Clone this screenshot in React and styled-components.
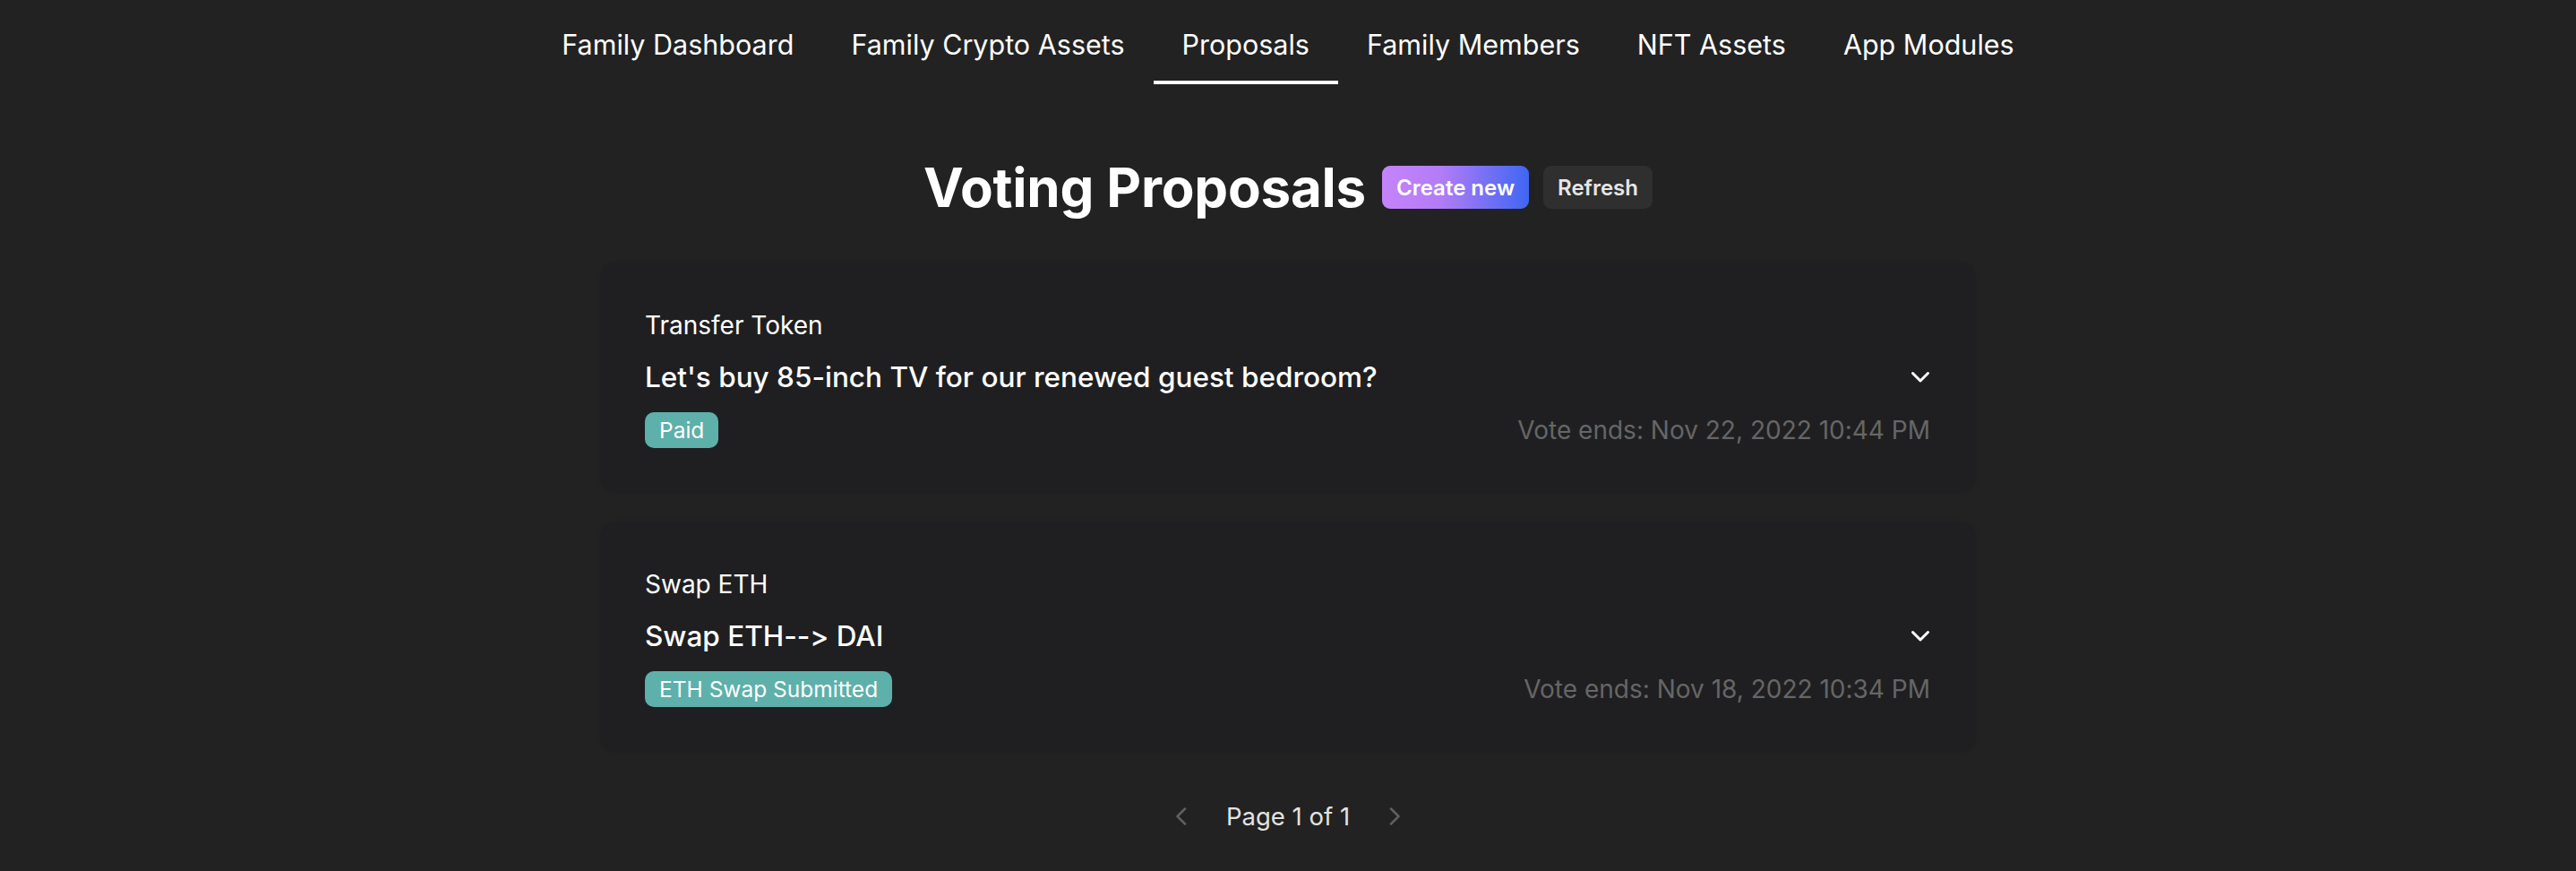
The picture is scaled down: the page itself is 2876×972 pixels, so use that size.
import React from 'react';
import styled, { createGlobalStyle } from 'styled-components';

const GlobalStyle = createGlobalStyle`
  body {
    margin: 0;
    background: #222222;
    color: #fff;
    font-family: Inter, "Noto Sans", sans-serif;
    font-feature-settings: "calt" 0;
  }
`;

const Page = styled.div`
  min-height: 100vh;
  display: flex;
  flex-direction: column;
  align-items: center;
`;

const Nav = styled.nav`
  display: flex;
  justify-content: center;
`;

const Tab = styled.a`
  padding: 26px 32px 16px;
  font-size: 30.5px;
  line-height: 48px;
  color: #fff;
  text-decoration: none;
  border-bottom: 4px solid ${({ active }) => (active ? '#fff' : 'transparent')};
  cursor: pointer;
`;

const Header = styled.div`
  display: flex;
  align-items: center;
  gap: 16px;
  margin-top: 79px;
`;

const Title = styled.h1`
  margin: 0 2px 0 0;
  font-size: 60px;
  line-height: 72px;
  font-weight: 700;
  letter-spacing: -0.2px;
`;

const Button = styled.button`
  height: 48px;
  padding: 0 16px;
  border: none;
  border-radius: 9px;
  font-family: inherit;
  font-size: 24px;
  font-weight: 600;
  color: ${({ primary }) => (primary ? '#fff' : '#e6e6e6')};
  background: ${({ primary }) =>
    primary ? 'linear-gradient(90deg, #c584fa 0%, #b27cf6 40%, #3f66f3 100%)' : '#2f2f2f'};
  cursor: pointer;
`;

const List = styled.div`
  width: 1536px;
  display: flex;
  flex-direction: column;
  gap: 32px;
  margin-top: 48px;
`;

const Card = styled.div`
  background: #1f1f21;
  border-radius: 18px;
  padding: 50px 51px 50px 50px;
  box-shadow: 0 0 4px rgba(0, 0, 0, 0.08);
`;

const Kind = styled.div`
  font-size: 28px;
  line-height: 40px;
`;

const TitleRow = styled.div`
  display: flex;
  align-items: center;
  justify-content: space-between;
  margin-top: 16px;
`;

const Question = styled.div`
  font-size: 31.5px;
  line-height: 44px;
  font-weight: 500;
`;

const Footer = styled.div`
  display: flex;
  align-items: center;
  justify-content: space-between;
  margin-top: 17px;
`;

const Badge = styled.span`
  display: inline-flex;
  align-items: center;
  height: 40px;
  padding: 0 16px;
  border-radius: 10px;
  background: #5eb0aa;
  font-size: 24.5px;
  color: #fff;
`;

const Ends = styled.span`
  font-size: 28px;
  color: #666666;
`;

const Pager = styled.div`
  display: flex;
  align-items: center;
  gap: 44px;
  margin-top: 52px;
  font-size: 27.5px;
  line-height: 40px;
  color: #e2e2e2;
`;

const ChevronDown = () => (
  <svg width="22" height="14" viewBox="0 0 22 14" fill="none">
    <polyline points="2.5,2.5 11,11 19.5,2.5" stroke="#fff" strokeWidth="3" strokeLinecap="round" strokeLinejoin="round" />
  </svg>
);

const Chevron = ({ dir }) => (
  <svg width="13" height="20" viewBox="0 0 13 20" fill="none">
    <polyline
      points={dir === 'left' ? '11,1.5 2.5,10 11,18.5' : '2,1.5 10.5,10 2,18.5'}
      stroke="#5f5f5f"
      strokeWidth="2.5"
      strokeLinecap="round"
      strokeLinejoin="round"
    />
  </svg>
);

const tabs = ['Family Dashboard', 'Family Crypto Assets', 'Proposals', 'Family Members', 'NFT Assets', 'App Modules'];

const proposals = [
  {
    kind: 'Transfer Token',
    title: "Let's buy 85-inch TV for our renewed guest bedroom?",
    status: 'Paid',
    ends: 'Nov 22, 2022 10:44 PM',
  },
  {
    kind: 'Swap ETH',
    title: 'Swap ETH--> DAI',
    status: 'ETH Swap Submitted',
    ends: 'Nov 18, 2022 10:34 PM',
  },
];

export default function App() {
  return (
    <Page>
      <GlobalStyle />
      <Nav>
        {tabs.map((t) => (
          <Tab key={t} active={t === 'Proposals'}>{t}</Tab>
        ))}
      </Nav>
      <Header>
        <Title>Voting Proposals</Title>
        <Button primary>Create new</Button>
        <Button>Refresh</Button>
      </Header>
      <List>
        {proposals.map((p) => (
          <Card key={p.title}>
            <Kind>{p.kind}</Kind>
            <TitleRow>
              <Question>{p.title}</Question>
              <ChevronDown />
            </TitleRow>
            <Footer>
              <Badge>{p.status}</Badge>
              <Ends>Vote ends: {p.ends}</Ends>
            </Footer>
          </Card>
        ))}
      </List>
      <Pager>
        <Chevron dir="left" />
        <span>Page 1 of 1</span>
        <Chevron dir="right" />
      </Pager>
    </Page>
  );
}
